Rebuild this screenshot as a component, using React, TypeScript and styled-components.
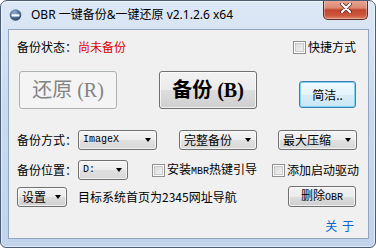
import React from 'react';
import styled, { createGlobalStyle } from 'styled-components';

const GlobalStyle = createGlobalStyle`
  html, body {
    margin: 0;
    padding: 0;
    background: #fff;
  }
  body {
    font-family: "Noto Sans CJK SC", "Liberation Sans", sans-serif;
    font-size: 12px;
    color: #000;
  }
`;

const Window = styled.div`
  width: 376px;
  height: 248px;
  box-sizing: border-box;
  border: 1px solid #4b5d74;
  border-radius: 7px 7px 6px 6px;
  background: linear-gradient(#dde8f5, #cadbef 40%, #c1d4eb);
  box-shadow: inset 0 0 0 1px rgba(255, 255, 255, 0.55);
  display: flex;
  flex-direction: column;
  overflow: hidden;
`;

const TitleBar = styled.div`
  height: 28px;
  flex: none;
  display: flex;
  align-items: flex-start;
  padding-left: 8px;
`;

const TitleIcon = styled.svg`
  flex: none;
  margin-top: 8px;
`;

const TitleText = styled.span`
  margin-left: 9px;
  margin-top: 6px;
  font: 12px/16px "Noto Sans", "Noto Sans CJK SC", sans-serif;
  color: #000;
  white-space: nowrap;
`;

const CloseButton = styled.div`
  width: 45px;
  height: 20px;
  box-sizing: border-box;
  margin: -1px 7px 0 auto;
  border: 1px solid #5e2a22;
  border-top: none;
  border-radius: 0 0 5px 5px;
  background: linear-gradient(#eaa999 0%, #dc8872 42%, #c4452f 52%, #cb563c 80%, #dd8266 100%);
  box-shadow: inset 0 0 0 1px rgba(255, 255, 255, 0.35);
  display: flex;
  justify-content: center;
  padding-top: 3px;
`;

const Client = styled.div`
  flex: 1;
  margin: 0 6px 8px 7px;
  border: 1px solid #8fa5c0;
  background: #f0f0f0;
  padding: 9px 12px 0 8px;
  display: flex;
  flex-direction: column;
`;

const Row = styled.div<{ $top: number; $h: number; $align?: string }>`
  display: flex;
  align-items: ${(p) => p.$align ?? 'center'};
  margin-top: ${(p) => p.$top}px;
  height: ${(p) => p.$h}px;
  flex: none;
`;

const Label = styled.span`
  width: 61px;
  flex: none;
  line-height: 16px;
  white-space: nowrap;
`;

const Warn = styled.span`
  color: #d80000;
  line-height: 16px;
`;

const Mono = styled.span`
  font-family: "Liberation Mono", monospace;
  font-size: 10px;
`;

const CheckLabel = styled.label<{ $left?: string }>`
  display: flex;
  align-items: center;
  gap: 2px;
  margin-left: ${(p) => p.$left ?? '0'};
  line-height: 16px;
  white-space: nowrap;
`;

const Box = styled.span`
  width: 13px;
  height: 13px;
  box-sizing: border-box;
  border: 1px solid #8e8f8f;
  background: linear-gradient(135deg, #d6d6d6, #f7f7f7);
  box-shadow: inset 0 0 0 1px #fff, inset 0 0 0 2px #c9c9c9;
  flex: none;
`;

const px = (v: number | string | undefined) => (typeof v === 'number' ? `${v}px` : v ?? '0');

const Button = styled.div<{ $w: number; $h: number; $left?: number | string }>`
  width: ${(p) => p.$w}px;
  height: ${(p) => p.$h}px;
  margin-left: ${(p) => px(p.$left)};
  box-sizing: border-box;
  flex: none;
  border: 1px solid #707070;
  border-radius: 3px;
  background: linear-gradient(#f2f2f2 0%, #ebebeb 50%, #dddddd 51%, #cfcfcf 100%);
  box-shadow: inset 0 0 0 1px rgba(255, 255, 255, 0.7);
  display: flex;
  align-items: center;
  justify-content: center;
  line-height: 16px;
  white-space: nowrap;
`;

const BigButton = styled(Button)<{ $disabled?: boolean }>`
  font-family: "Liberation Serif", "Noto Sans CJK SC", serif;
  font-size: 20px;
  font-weight: ${(p) => (p.$disabled ? 'normal' : 'bold')};
  color: ${(p) => (p.$disabled ? '#838383' : '#000')};
  ${(p) =>
    p.$disabled &&
    `
    border-color: #adb2b5;
    background: #f4f4f4;
    box-shadow: none;
  `}
`;

const FocusButton = styled(Button)`
  align-self: flex-end;
  margin-bottom: 1px;
  border-color: #3c7fb1;
  background: linear-gradient(#f1f9fe 0%, #e5f3fb 50%, #d7ecf8 51%, #cbe6f6 100%);
  box-shadow: inset 0 0 0 1px #7fd2f2;
`;

const Combo = styled.div<{ $w: number; $left?: number }>`
  width: ${(p) => p.$w}px;
  height: 20px;
  margin-left: ${(p) => p.$left ?? 0}px;
  box-sizing: border-box;
  flex: none;
  border: 1px solid #707070;
  border-radius: 3px;
  background: linear-gradient(#f4f4f4 0%, #ececec 50%, #e0e0e0 51%, #d8d8d8 100%);
  box-shadow: inset 0 0 0 1px rgba(255, 255, 255, 0.7);
  display: flex;
  align-items: center;
  justify-content: space-between;
  padding: 0 5px 0 4px;
  line-height: 16px;
  white-space: nowrap;
`;

const Arrow = styled.span`
  width: 0;
  height: 0;
  border-left: 3.5px solid transparent;
  border-right: 3.5px solid transparent;
  border-top: 4px solid #000;
  flex: none;
`;

const MenuButton = styled(Button)`
  justify-content: space-between;
  padding: 0 5px 0 4px;
`;

const Info = styled.span`
  margin-left: 11px;
  line-height: 16px;
  white-space: nowrap;
`;

const About = styled.a`
  margin-left: auto;
  margin-right: 1px;
  color: #0066cc;
  text-decoration: none;
  line-height: 16px;
  letter-spacing: 1px;
`;

export default function App() {
  return (
    <>
      <GlobalStyle />
      <Window>
        <TitleBar>
          <TitleIcon width="13" height="12" viewBox="0 0 13 12">
            <defs>
              <radialGradient id="ig" cx="0.4" cy="0.3" r="0.8">
                <stop offset="0" stopColor="#8eaed3" />
                <stop offset="1" stopColor="#1d3658" />
              </radialGradient>
            </defs>
            <circle cx="6.5" cy="6" r="5.8" fill="url(#ig)" />
            <rect x="2.5" y="5.2" width="8" height="2.2" rx="0.6" fill="#fff" />
          </TitleIcon>
          <TitleText>OBR 一键备份&amp;一键还原 v2.1.2.6 x64</TitleText>
          <CloseButton>
            <svg width="12" height="10" viewBox="0 0 12 10">
              <path d="M2 1 L10 9 M10 1 L2 9" stroke="#5b2a24" strokeWidth="3.8" strokeLinecap="round" />
              <path d="M2 1 L10 9 M10 1 L2 9" stroke="#fff" strokeWidth="2.2" strokeLinecap="round" />
            </svg>
          </CloseButton>
        </TitleBar>
        <Client>
          <Row $top={0} $h={16}>
            <Label>备份状态：</Label>
            <Warn>尚未备份</Warn>
            <CheckLabel $left="auto">
              <Box />
              快捷方式
            </CheckLabel>
          </Row>
          <Row $top={16} $h={38} $align="stretch">
            <BigButton $w={98} $h={38} $left={2} $disabled>
              还原 (R)
            </BigButton>
            <BigButton $w={98} $h={38} $left={42}>
              备份 (B)
            </BigButton>
            <FocusButton $w={57} $h={27} $left={42}>
              简洁..
            </FocusButton>
          </Row>
          <Row $top={21} $h={20}>
            <Label>备份方式：</Label>
            <Combo $w={79}>
              <Mono>ImageX</Mono>
              <Arrow />
            </Combo>
            <Combo $w={78} $left={22}>
              完整备份
              <Arrow />
            </Combo>
            <Combo $w={79} $left={21}>
              最大压缩
              <Arrow />
            </Combo>
          </Row>
          <Row $top={10} $h={20}>
            <Label>备份位置：</Label>
            <Combo $w={50}>
              <Mono>D:</Mono>
              <Arrow />
            </Combo>
            <CheckLabel $left="24px">
              <Box />
              <span>
                安装<Mono>MBR</Mono>热键引导
              </span>
            </CheckLabel>
            <CheckLabel $left="15px">
              <Box />
              添加启动驱动
            </CheckLabel>
          </Row>
          <Row $top={6} $h={21}>
            <MenuButton $w={50} $h={20}>
              设置
              <Arrow />
            </MenuButton>
            <Info>目标系统首页为2345网址导航</Info>
            <Button $w={68} $h={21} $left="auto">
              <span>
                删除<Mono>OBR</Mono>
              </span>
            </Button>
          </Row>
          <Row $top={11} $h={16}>
            <About href="#">关 于</About>
          </Row>
        </Client>
      </Window>
    </>
  );
}
